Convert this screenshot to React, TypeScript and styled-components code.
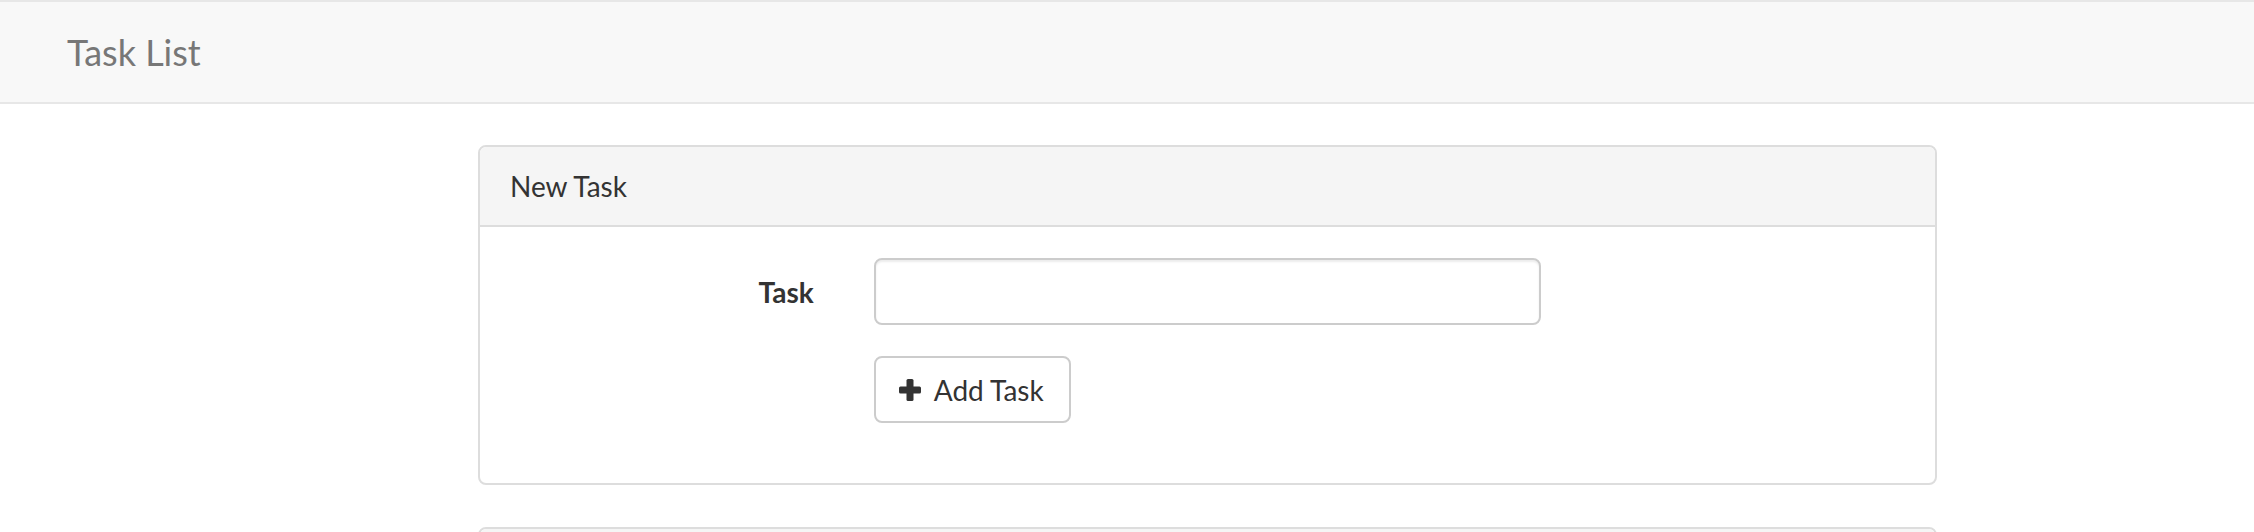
import React from "react";
import styled, { createGlobalStyle } from "styled-components";

const GlobalStyle = createGlobalStyle`
  html, body {
    margin: 0;
    padding: 0;
    background: #ffffff;
  }
  body {
    font-family: Lato, "Open Sans", "Liberation Sans", sans-serif;
    color: #333333;
    font-size: 28px;
    line-height: 40px;
  }
  * { box-sizing: border-box; }
`;

const Navbar = styled.nav`
  display: flex;
  align-items: center;
  height: 104px;
  background: #f8f8f8;
  border-top: 2px solid #e7e7e7;
  border-bottom: 2px solid #e7e7e7;
  padding-left: 67px;
`;

const Brand = styled.a`
  font-size: 36px;
  line-height: 40px;
  color: #777777;
  text-decoration: none;
`;

const Main = styled.main`
  display: flex;
  flex-direction: column;
  gap: 42px;
  padding: 41px 0 0 478px;
`;

const Panel = styled.section`
  width: 1459px;
  border: 2px solid #dddddd;
  border-radius: 8px;
  background: #ffffff;
  overflow: hidden;
`;

const PanelHeading = styled.header`
  background: #f5f5f5;
  border-bottom: 2px solid #dddddd;
  padding: 19px 30px;
  font-size: 28px;
  line-height: 40px;
  color: #333333;
`;

const PanelBody = styled.div`
  padding: 31px 30px 60px;
`;

const Form = styled.form`
  display: grid;
  grid-template-columns: 3fr 6fr 3fr;
  margin: 0 -30px;
  row-gap: 31px;
`;

const Label = styled.label`
  grid-column: 1;
  text-align: right;
  font-weight: 700;
  padding: 14px 30px 0;
  font-size: 28px;
  line-height: 40px;
  color: #333333;
`;

const Field = styled.div`
  grid-column: 2;
  padding: 0 30px;
  display: flex;
  align-items: flex-start;
`;

const Input = styled.input`
  width: 100%;
  height: 67px;
  border: 2px solid #cccccc;
  border-radius: 8px;
  box-shadow: inset 0 2px 2px rgba(0, 0, 0, 0.075);
  padding: 12px 24px;
  font-family: inherit;
  font-size: 28px;
  color: #555555;
  background: #ffffff;
  outline: none;
`;

const Button = styled.button`
  display: inline-flex;
  align-items: center;
  height: 67px;
  padding: 0 25px 0 23px;
  border: 2px solid #cccccc;
  border-radius: 8px;
  background: #ffffff;
  color: #333333;
  font-family: inherit;
  font-size: 28px;
  line-height: 40px;
  cursor: pointer;
`;

const PlusIcon = styled.svg`
  width: 22px;
  height: 22px;
  margin-right: 13px;
  flex: none;
`;

const Plus = () => (
  <PlusIcon viewBox="0 0 22 22" aria-hidden="true">
    <rect x="7.5" y="0" width="7" height="22" rx="1.5" fill="#333333" />
    <rect x="0" y="7.5" width="22" height="7" rx="1.5" fill="#333333" />
  </PlusIcon>
);

export default function App() {
  return (
    <>
      <GlobalStyle />
      <Navbar>
        <Brand href="#">Task List</Brand>
      </Navbar>
      <Main>
        <Panel>
          <PanelHeading>New Task</PanelHeading>
          <PanelBody>
            <Form onSubmit={(e) => e.preventDefault()}>
              <Label htmlFor="task-name">Task</Label>
              <Field>
                <Input id="task-name" type="text" name="name" />
              </Field>
              <Field>
                <Button type="submit">
                  <Plus />
                  Add Task
                </Button>
              </Field>
            </Form>
          </PanelBody>
        </Panel>
        <Panel>
          <PanelHeading>Current Tasks</PanelHeading>
        </Panel>
      </Main>
    </>
  );
}
